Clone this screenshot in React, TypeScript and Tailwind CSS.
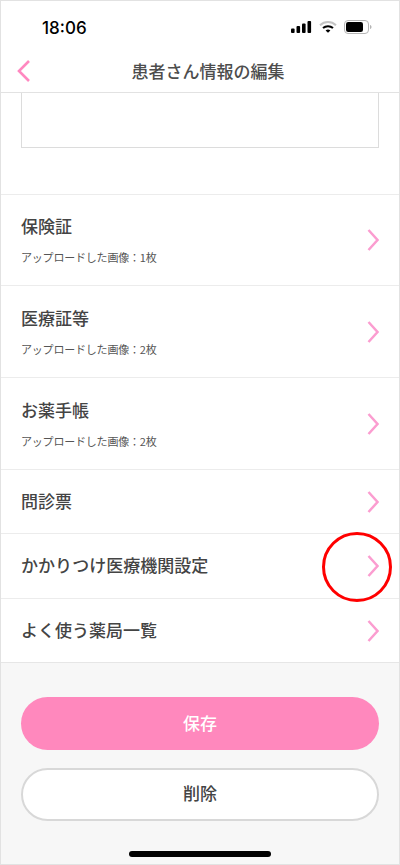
import React from 'react';

const JP = "font-['Noto_Sans_CJK_JP','Noto_Sans',sans-serif]";

const Chevron = () => (
  <svg width="14" height="24" viewBox="0 0 14 24" fill="none" className="shrink-0">
    <path d="M3.5 2 L12.5 12 L3.5 22" stroke="#fb9dd0" strokeWidth="2.5" />
  </svg>
);

const rows = [
  { title: '保険証', sub: 'アップロードした画像：1枚', h: 'h-[91px]', pad: 'pb-[2px]' },
  { title: '医療証等', sub: 'アップロードした画像：2枚', h: 'h-[92px]', pad: 'pb-[1px]' },
  { title: 'お薬手帳', sub: 'アップロードした画像：2枚', h: 'h-[92px]', pad: 'pb-[1px]' },
  { title: '問診票', h: 'h-[64px]', pad: 'pb-[2px]' },
  { title: 'かかりつけ医療機関設定', h: 'h-[65px]', pad: 'pb-[2px]' },
  { title: 'よく使う薬局一覧', h: 'h-[64px]', pad: 'pb-[2px]' },
];

const StatusBar = () => (
  <div className="h-[50px] flex items-start justify-between pl-[41px] pr-[27px] pt-[16px]">
    <span className="font-['Inter',sans-serif] text-[17px] leading-[22px] font-medium text-black">18:06</span>
    <div className="flex items-center gap-[7px] mt-[3px]">
      {/* signal */}
      <svg width="21" height="14" viewBox="0 0 21 14" fill="#000">
        <rect x="0" y="8.5" width="3.6" height="4.5" rx="1" />
        <rect x="5.5" y="6" width="3.6" height="7" rx="1" />
        <rect x="11" y="3.5" width="3.6" height="9.5" rx="1" />
        <rect x="16.5" y="1" width="3.6" height="12" rx="1" />
      </svg>
      {/* wifi */}
      <svg width="18" height="14" viewBox="0 0 18 14" fill="none">
        <path d="M1 5.2 C5.6 1 12.4 1 17 5.2" stroke="#c4c4c4" strokeWidth="2" />
        <path d="M4 8 C6.8 5.6 11.2 5.6 14 8" stroke="#000" strokeWidth="2" />
        <path d="M6.6 10.4 L9 12.8 L11.4 10.4 C10 9.2 8 9.2 6.6 10.4 Z" fill="#000" />
      </svg>
      {/* battery */}
      <svg width="28" height="14" viewBox="0 0 28 14" fill="none">
        <rect x="0.5" y="0.5" width="24" height="13" rx="3.5" stroke="#b5b5b5" />
        <rect x="2" y="2" width="17" height="10" rx="2.2" fill="#000" />
        <path d="M26 5 C27 5.4 27.5 6 27.5 7 C27.5 8 27 8.6 26 9 Z" fill="#b5b5b5" />
      </svg>
    </div>
  </div>
);

export default function App() {
  return (
    <div lang="ja" className={`relative w-[400px] h-[865px] overflow-hidden bg-white border border-[#e2e2e2] flex flex-col ${JP}`}>
      <header className="shrink-0 border-b border-[#e2e2e2]">
        <StatusBar />
        <div className="relative h-[41px] flex items-center justify-center pl-[16px] pb-[2px]">
          <svg width="14" height="24" viewBox="0 0 14 24" fill="none" className="absolute left-[16px] top-[8px]">
            <path d="M12 2 L2 12 L12 22" stroke="#ff88c0" strokeWidth="2.6" />
          </svg>
          <h1 className="text-[17px] font-medium text-[#4d4d4d] leading-none">患者さん情報の編集</h1>
        </div>
      </header>

      <div className="shrink-0 h-[102px] border-b border-[#ececec] px-[20px]">
        <div className="h-[55px] border border-t-0 border-[#dcdcdc]" />
      </div>

      <ul className="shrink-0">
        {rows.map((r) => (
          <li key={r.title} className={`${r.h} flex items-center justify-between pl-[20px] pr-[20px] border-b border-[#ececec] last:border-[#e6e6e6]`}>
            <div className={r.pad}>
              <div className="text-[17px] font-medium leading-[24px] text-[#444]">{r.title}</div>
              {r.sub && <div className="mt-[11px] text-[11px] leading-[16px] tracking-[-0.2px] text-[#555]">{r.sub}</div>}
            </div>
            <Chevron />
          </li>
        ))}
      </ul>

      <div className="flex-1 bg-[#f7f7f7] px-[20px] pt-[34px] flex flex-col gap-[18px]">
        <button className="h-[53px] pb-[2px] rounded-full bg-[#ff88bd] text-white text-[17px] font-medium">保存</button>
        <button className="h-[53px] pb-[3px] rounded-full bg-white border-2 border-[#d8d8d8] text-[#444] text-[17px] font-medium">削除</button>
      </div>

      {/* home indicator */}
      <div className="absolute left-[128px] top-[850px] w-[142px] h-[6px] rounded-full bg-black" />
      {/* annotation */}
      <div className="absolute left-[321px] top-[531px] w-[70px] h-[70px] rounded-full border-[3px] border-[#f00]" />
    </div>
  );
}
